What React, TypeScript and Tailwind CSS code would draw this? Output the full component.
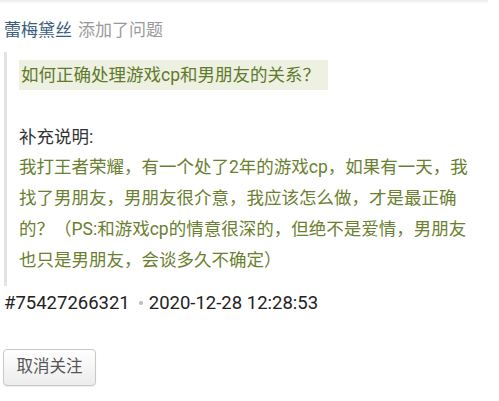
export default function App() {
  const font = { fontFamily: "Roboto, 'Noto Sans CJK SC', sans-serif" };
  return (
    <div className="w-[499px] h-[401px] bg-white overflow-hidden" style={font}>
      <div className="w-[488px] h-[4px] bg-gradient-to-b from-[#ececec] to-white" />
      <div className="pl-[4px] pt-[14px] text-[17px] leading-[24px]">
        <span className="text-[#3c5e7e]">蕾梅黛丝</span>
        <span className="text-[#9a9a9a] ml-[6px]">添加了问题</span>
      </div>
      <div className="ml-[4px] mt-[10px] border-l-[3px] border-[#e3e3e3] pl-[12px] pt-[8px] pb-[8px] h-[234px]">
        <div className="inline-block bg-[#eef1e2] text-[#5e7a2a] text-[17.5px] leading-[30px] pl-[2px] pr-[8px]">
          如何正确处理游戏cp和男朋友的关系？
        </div>
        <div className="mt-[32px] text-[#333] text-[17.5px] leading-[30px]">补充说明:</div>
        <div className="text-[#6a7f30] text-[17.5px] leading-[31px] whitespace-nowrap">
          我打王者荣耀，有一个处了2年的游戏cp，如果有一天，我
          <br />
          找了男朋友，男朋友很介意，我应该怎么做，才是最正确
          <br />
          的？（PS:和游戏cp的情意很深的，但绝不是爱情，男朋友
          <br />
          也只是男朋友，会谈多久不确定）
        </div>
      </div>
      <div className="pl-[4px] mt-[2px] flex items-center text-[18.5px] leading-[30px] text-[#222]">
        <span>#75427266321</span>
        <span className="ml-[9px] mr-[6px] w-[4px] h-[4px] rounded-full bg-[#bbb]" />
        <span>2020-12-28 12:28:53</span>
      </div>
      <div className="pl-[3px] mt-[31px]">
        <button className="w-[93px] h-[37px] rounded-[4px] border border-[#c8c8c8] bg-gradient-to-b from-white to-[#ececec] text-[#555] text-[16.5px] shadow-[0_1px_1px_rgba(0,0,0,0.08)]">
          取消关注
        </button>
      </div>
    </div>
  );
}
